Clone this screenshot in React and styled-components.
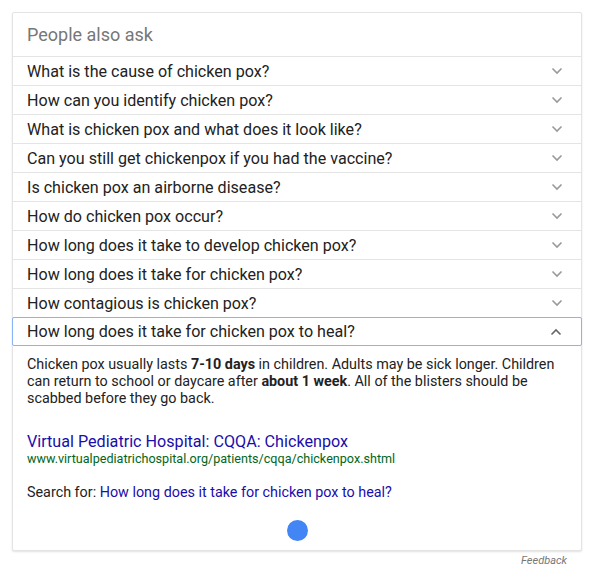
import React from "react";
import styled, { createGlobalStyle } from "styled-components";

const Global = createGlobalStyle`
  html, body { margin: 0; padding: 0; background: #fff; }
  body { font-family: Roboto, "Liberation Sans", Arial, sans-serif; }
`;

const Page = styled.div`
  padding: 12px 0 0 12px;
  width: 570px;
`;

const Card = styled.div`
  border: 1px solid #e4e4e4;
  border-radius: 2px;
  box-shadow: 0 1px 2px rgba(0,0,0,0.12);
  background: #fff;
`;

const Header = styled.div`
  height: 43px;
  display: flex;
  align-items: center;
  padding: 0 14px;
  font-size: 18px;
  color: #777;
  border-bottom: 1px solid #e4e4e4;
`;

const Row = styled.div`
  height: 29px;
  display: flex;
  align-items: center;
  justify-content: space-between;
  padding: 0 14px;
  font-size: 16.1px;
  color: #222;
  box-sizing: border-box;
  border-bottom: 1px solid #e4e4e4;
  ${p => p.$open && `
    height: 29px;
    margin: -1px -1px 0;
    border: 1px solid #8ab4f8;
    border-radius: 2px;
    padding: 0 15px 0 14px;
  `}
`;

const Chevron = styled.svg`
  width: 12px;
  height: 8px;
  margin-right: 4px;
  flex: none;
`;

const Answer = styled.div`
  padding: 10px 14px 0;
`;

const Snippet = styled.p`
  margin: 0;
  font-size: 14.35px;
  line-height: 17px;
  color: #222;
  b { font-weight: 700; }
`;

const Source = styled.div`
  margin-top: 25px;
`;

const Title = styled.a`
  display: block;
  font-size: 16.15px;
  line-height: 19px;
  color: #1a0dab;
  text-decoration: none;
`;

const Url = styled.div`
  font-size: 12.6px;
  line-height: 15px;
  color: #006621;
`;

const SearchFor = styled.div`
  margin-top: 18px;
  font-size: 14.35px;
  line-height: 17px;
  color: #222;
  a { color: #1a0dab; text-decoration: none; }
`;

const DotWrap = styled.div`
  display: flex;
  justify-content: center;
  padding: 19px 0 9px;
`;

const Dot = styled.div`
  width: 21px;
  height: 21px;
  border-radius: 50%;
  background: #4285f4;
`;

const Feedback = styled.div`
  text-align: right;
  padding-right: 15px;
  margin-top: 3px;
  font-size: 11px;
  font-style: italic;
  color: #777;
`;

const questions = [
  "What is the cause of chicken pox?",
  "How can you identify chicken pox?",
  "What is chicken pox and what does it look like?",
  "Can you still get chickenpox if you had the vaccine?",
  "Is chicken pox an airborne disease?",
  "How do chicken pox occur?",
  "How long does it take to develop chicken pox?",
  "How long does it take for chicken pox?",
  "How contagious is chicken pox?",
];

const Down = () => (
  <Chevron viewBox="0 0 12 8">
    <path d="M1.5 1.5 L6 6 L10.5 1.5" fill="none" stroke="#999" strokeWidth="1.6" />
  </Chevron>
);
const Up = () => (
  <Chevron viewBox="0 0 12 8">
    <path d="M1.5 6.5 L6 2 L10.5 6.5" fill="none" stroke="#666" strokeWidth="1.6" />
  </Chevron>
);

export default function App() {
  return (
    <>
      <Global />
      <Page>
        <Card>
          <Header>People also ask</Header>
          {questions.map(q => (
            <Row key={q}>
              <span>{q}</span>
              <Down />
            </Row>
          ))}
          <Row $open>
            <span>How long does it take for chicken pox to heal?</span>
            <Up />
          </Row>
          <Answer>
            <Snippet>
              Chicken pox usually lasts <b>7-10 days</b> in children. Adults may be sick longer. Children can return to school or daycare after <b>about 1 week</b>. All of the blisters should be scabbed before they go back.
            </Snippet>
            <Source>
              <Title href="#">Virtual Pediatric Hospital: CQQA: Chickenpox</Title>
              <Url>www.virtualpediatrichospital.org/patients/cqqa/chickenpox.shtml</Url>
            </Source>
            <SearchFor>
              Search for: <a href="#">How long does it take for chicken pox to heal?</a>
            </SearchFor>
          </Answer>
          <DotWrap>
            <Dot />
          </DotWrap>
        </Card>
        <Feedback>Feedback</Feedback>
      </Page>
    </>
  );
}
